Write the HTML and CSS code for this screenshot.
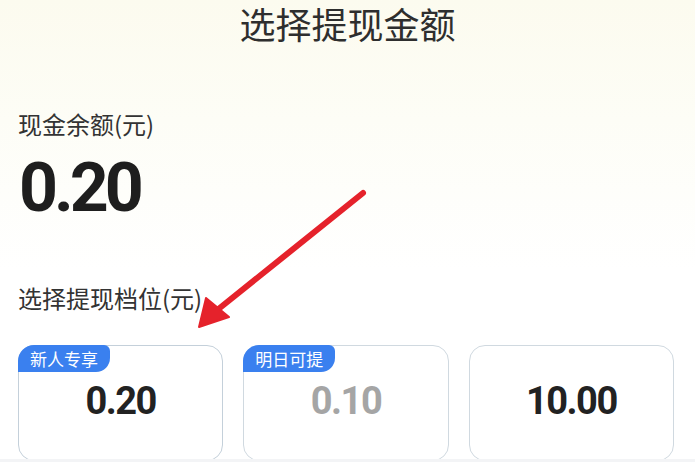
FILE: index.html
```html
<!DOCTYPE html>
<html lang="zh-CN">
<head>
<meta charset="utf-8">
<title>选择提现金额</title>
<link rel="stylesheet" href="styles.css">
</head>
<body>
<div class="page">
  <header class="header">选择提现金额</header>
  <section class="balance">
    <div class="label">现金余额(元)</div>
    <div class="amount">0.20</div>
  </section>
  <section class="tiers">
    <div class="label">选择提现档位(元)</div>
    <div class="cards">
      <div class="card selected">
        <span class="tag">新人专享</span>
        <span class="value">0.20</span>
      </div>
      <div class="card">
        <span class="tag">明日可提</span>
        <span class="value muted">0.10</span>
      </div>
      <div class="card">
        <span class="value">10.00</span>
      </div>
    </div>
  </section>
  <svg class="arrow" width="695" height="462" viewBox="0 0 695 462">
    <line x1="363" y1="193" x2="216" y2="311" stroke="#e5222b" stroke-width="6" stroke-linecap="round"/>
    <polygon points="199,327 206,298 229,317" fill="#e5222b" stroke="#e5222b" stroke-width="2" stroke-linejoin="round"/>
  </svg>
  <div class="bottom-strip"></div>
</div>
</body>
</html>
```
FILE: styles.css
```css
html, body {
  margin: 0;
  padding: 0;
  overflow: hidden;
}
body {
  width: 695px;
  height: 462px;
  font-family: "Noto Sans CJK SC", "Noto Sans", sans-serif;
  color: #333;
}
.page {
  position: relative;
  width: 695px;
  height: 462px;
  background: linear-gradient(#fcfbef 0, #fdfdf6 120px, #ffffff 270px);
}
.header {
  height: 46px;
  line-height: 46px;
  text-align: center;
  font-size: 36px;
  color: #2e2e2e;
}
.label {
  font-size: 24px;
  line-height: 24px;
  color: #333;
  padding-left: 18px;
}
.balance {
  padding-top: 66px;
}
.amount {
  margin-top: 18px;
  padding-left: 19px;
  font-family: Roboto, "Liberation Sans", sans-serif;
  font-weight: 700;
  font-size: 68px;
  line-height: 68px;
  letter-spacing: -4px;
  color: #1e1e1e;
}
.tiers {
  padding-top: 64px;
}
.cards {
  display: grid;
  grid-template-columns: repeat(3, 1fr);
  gap: 20px;
  padding: 0 21px 0 18px;
  margin-top: 35px;
}
.card {
  position: relative;
  box-sizing: border-box;
  height: 116px;
  border: 1px solid #d0d9e0;
  border-radius: 16px;
  background: #fff;
  padding-top: 36px;
  text-align: center;
}
.card.selected {
  border-color: #c4d0da;
}
.tag {
  position: absolute;
  left: -1px;
  top: -1px;
  height: 27px;
  line-height: 27px;
  padding: 0 12px 0 12px;
  font-size: 17px;
  color: #fff;
  background: #3a80ef;
  border-radius: 16px 6px 14px 0;
}
.value {
  display: inline-block;
  font-family: Roboto, "Liberation Sans", sans-serif;
  font-weight: 700;
  font-size: 38px;
  line-height: 38px;
  letter-spacing: -1.5px;
  color: #222;
}
.value.muted {
  color: #a5a5a5;
}
.arrow {
  position: absolute;
  left: 0;
  top: 0;
  pointer-events: none;
}
.bottom-strip {
  position: absolute;
  left: 0;
  right: 0;
  bottom: 0;
  height: 3px;
  background: #f3f4f6;
}
```
